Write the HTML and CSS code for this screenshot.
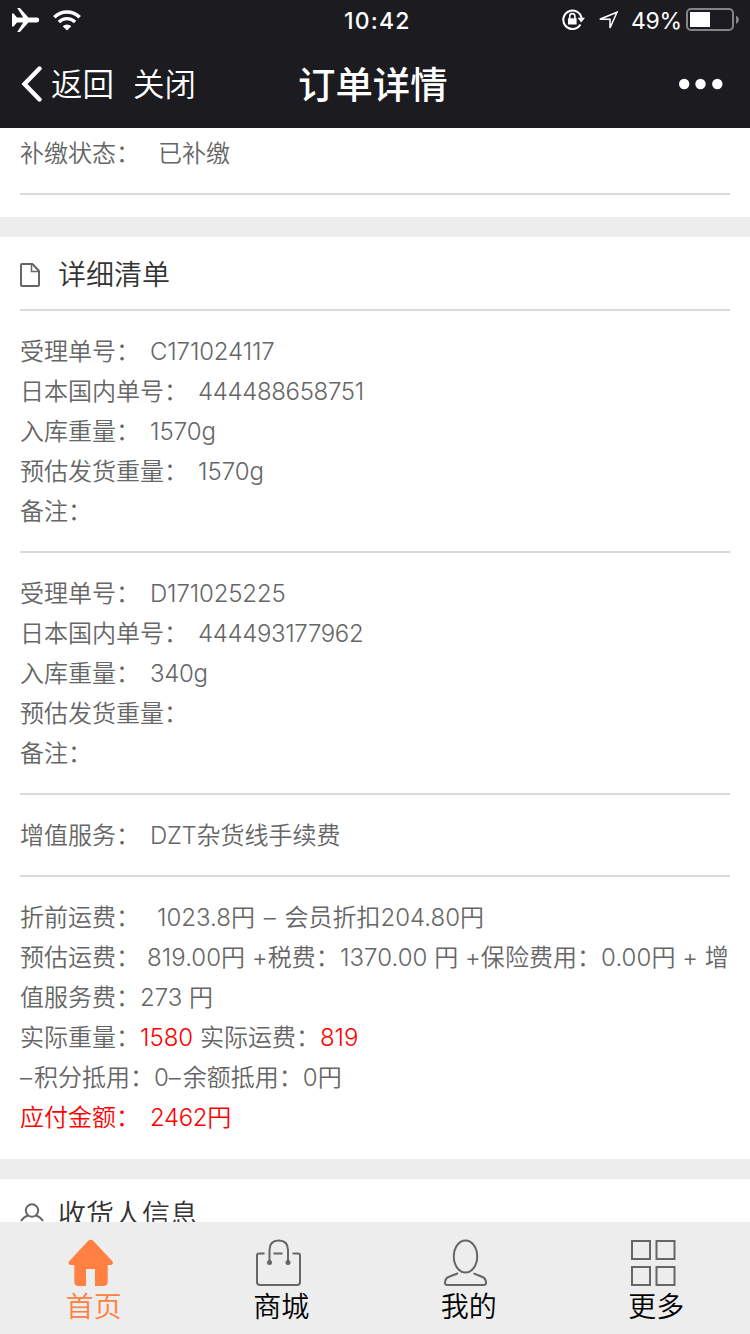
FILE: index.html
```html
<!DOCTYPE html>
<html lang="zh-CN">
<head>
<meta charset="utf-8">
<title>订单详情</title>
<link rel="stylesheet" href="styles.css">
</head>
<body>
<header class="top">
  <div class="status">
    <svg class="plane" width="28" height="26" viewBox="0 0 28 26"><path fill="#fff" d="M0 6.500h1.600L5 10.600h6.200L5.200.9h2.700l8.500 9.700h8.400a2.400 2.400 0 0 1 0 4.800h-8.400L7.900 25.100H5.200l6-9.700H5l-3.400 4.100H0z"/></svg>
    <svg class="wifi" width="28" height="21" viewBox="0 0 28 21"><g fill="none" stroke="#fff" stroke-width="3.400"><path d="M1.300 7.200a18 18 0 0 1 25.400 0"/><path d="M5.900 12a11.500 11.500 0 0 1 16.200 0"/></g><path fill="#fff" d="M14 20.500l-4.300-4.300a6 6 0 0 1 8.600 0z"/></svg>
    <span class="clock">10:42</span>
    <svg class="lock" width="24" height="22" viewBox="0 0 24 22"><path d="M18.400 15.500A9.200 9.200 0 1 1 19.600 9.500" fill="none" stroke="#fff" stroke-width="2"/><path d="M15.500 8.800H23l-3.800 4.700z" fill="#fff"/><path d="M6 9.300h8.600v6.200H6z" fill="#fff"/><path d="M7.700 10V7.200a2.600 2.600 0 0 1 5.200 0V10" fill="none" stroke="#fff" stroke-width="1.600"/></svg>
    <svg class="loc" width="21" height="21" viewBox="0 0 21 21"><path d="M1.800 9.300L19 2.200 12 18V9.300z" fill="none" stroke="#fff" stroke-width="1.500"/></svg>
    <span class="pct">49%</span>
    <svg class="battery" width="54" height="24" viewBox="0 0 54 24"><rect x="1" y="1" width="46" height="21" rx="4" fill="none" stroke="#858587" stroke-width="2"/><rect x="4" y="4" width="20" height="15" fill="#fff"/><path d="M50 7.500q3 1.500 3 4.200t-3 4.200z" fill="#858587"/></svg>
  </div>
  <nav class="bar">
    <svg class="back" width="22" height="36" viewBox="0 0 22 36"><path d="M18.500 2.500L3.500 18l15 15.500" fill="none" stroke="#fff" stroke-width="4.400" stroke-linecap="round"/></svg>
    <span class="nav-link ret">返回</span>
    <span class="nav-link close">关闭</span>
    <h1 class="title">订单详情</h1>
    <svg class="dots" width="44" height="12" viewBox="0 0 44 12" fill="#fff"><circle cx="5.200" cy="6" r="5.200"/><circle cx="21.500" cy="6" r="5.200"/><circle cx="38.300" cy="6" r="5.200"/></svg>
  </nav>
</header>

<main class="content">
  <section class="card first">
    <div class="group"><p class="row">补缴状态：<span class="v w18">已补缴</span></p></div>
  </section>
  <section class="card">
    <h2 class="heading">
      <svg class="doc" width="20" height="24" viewBox="0 0 20 24" fill="none" stroke="#666" stroke-width="2"><path d="M2 1h10.500L19 8v14a1 1 0 0 1-1 1H2a1 1 0 0 1-1-1V2a1 1 0 0 1 1-1z"/><path d="M11.500 1v7.500H19" stroke-width="1.500"/></svg>
      <span>详细清单</span>
    </h2>
    <div class="group">
      <p class="row">受理单号：<span class="v code">C171024117</span></p>
      <p class="row">日本国内单号：<span class="v num">444488658751</span></p>
      <p class="row">入库重量：<span class="v">1570g</span></p>
      <p class="row">预估发货重量：<span class="v">1570g</span></p>
      <p class="row">备注：</p>
    </div>
    <div class="group">
      <p class="row">受理单号：<span class="v code">D171025225</span></p>
      <p class="row">日本国内单号：<span class="v num">444493177962</span></p>
      <p class="row">入库重量：<span class="v num">340g</span></p>
      <p class="row">预估发货重量：</p>
      <p class="row">备注：</p>
    </div>
    <div class="group">
      <p class="row">增值服务：<span class="v"><span class="num">DZT</span>杂货线手续费</span></p>
    </div>
    <div class="group last">
      <p class="row">折前运费：<span class="v w17">1023.8円 <span class="dash">–</span> 会员折扣204.80円</span></p>
      <p class="row">预估运费：<span class="v w7 wide">819.00円 +税费：1370.00 円 +保险费用：0.00円 + 增</span></p>
      <p class="row">值服务费：273 円</p>
      <p class="row">实际重量：<span class="red">1580</span> 实际运费：<span class="red">819</span></p>
      <p class="row"><span class="minus">–</span>积分抵用：0<span class="minus">–</span>余额抵用：0円</p>
      <p class="row red">应付金额：<span class="v num">2462円</span></p>
    </div>
  </section>
  <section class="card">
    <h2 class="heading receiver">
      <svg class="person" width="24" height="24" viewBox="0 0 24 24" fill="none" stroke="#666" stroke-width="2"><circle cx="12" cy="7.500" r="6.200"/><path d="M1 18q3-4.500 7.500-5.500M23 18q-3-4.500-7.500-5.500"/></svg>
      <span>收货人信息</span>
    </h2>
  </section>
</main>

<footer class="tabs">
  <a class="tab active"><svg width="46" height="48" viewBox="0 0 46 48"><path fill="#ff8040" d="M20.200 1.800q2.600-2.300 5 0L44.600 22.500q1 3-1.600 3.500h-3.300v16.500q0 4.500-4.500 4.500H27V30h-9v17h-7.200q-4.500 0-4.500-4.500V26H2.500q-2.700-.5-1.500-3.500z"/></svg><span>首页</span></a>
  <a class="tab"><svg width="46" height="48" viewBox="0 0 46 48" fill="none" stroke="#666" stroke-width="2"><path d="M9.500 14.500H4q-2 0-2 2V43q0 3 3 3h37q3 0 3-3V16.500q0-2-2-2h-5.500M18.500 14.500h9"/><path d="M14.500 23V11q0-9.500 9.200-9.500T33 11v12"/><circle cx="14.500" cy="23.500" r="1.500" fill="#666"/><circle cx="33" cy="23.500" r="1.500" fill="#666"/></svg><span>商城</span></a>
  <a class="tab"><svg width="46" height="48" viewBox="0 0 46 48" fill="none" stroke="#666" stroke-width="2"><ellipse cx="22.500" cy="17.500" rx="11.700" ry="16"/><path d="M15 34.300L5.500 38Q2 39.500 2 44q0 2 2.500 2h36q2.500 0 2.500-2 0-4.500-3.500-6L30.500 34.300"/></svg><span>我的</span></a>
  <a class="tab"><svg width="46" height="48" viewBox="0 0 46 48" fill="none" stroke="#666" stroke-width="2"><rect x="2" y="2" width="18" height="18"/><rect x="26.500" y="2" width="18" height="18"/><rect x="2" y="28" width="18" height="18"/><rect x="26.500" y="28" width="18" height="18"/></svg><span>更多</span></a>
</footer>
</body>
</html>
```
FILE: styles.css
```css
* { box-sizing: border-box; margin: 0; padding: 0; }
body {
  width: 750px; height: 1334px; overflow: hidden;
  display: flex; flex-direction: column;
  background: #fff; color: #666;
  font-family: Inter, "Noto Sans CJK SC", sans-serif;
  font-size: 24px; font-weight: 350;
}
svg { display: block; flex: none; }
.top { flex: none; height: 128px; background: #1c1b20; color: #fff; }
.status { height: 40px; display: flex; align-items: center; padding-left: 12px; }
.wifi { margin-left: 13px; }
.clock { margin-left: 263px; width: 67px; padding-top: 1px; font-size: 23px; font-weight: 500; letter-spacing: 1.2px; white-space: nowrap; }
.lock { margin-left: 151px; }
.loc { margin-left: 12px; }
.pct { margin-left: 12px; width: 50px; padding-top: 1px; font-size: 23px; font-weight: 400; letter-spacing: -.3px; white-space: nowrap; }
.battery { margin-left: 5px; }
.bar { height: 88px; display: flex; align-items: center; padding: 0 27px 0 21px; }
.nav-link { padding-top: 2px; font-size: 31.5px; font-weight: 350; line-height: 44px; white-space: nowrap; }
.ret { margin-left: 8px; width: 62px; }
.close { margin-left: 20px; width: 62px; }
.title { margin-left: 103px; padding-top: 4px; font-size: 37.4px; font-weight: 500; line-height: 50px; white-space: nowrap; }
.dots { margin-left: auto; }
.content { flex: 1; min-height: 0; overflow: hidden; background: #ededed; display: flex; flex-direction: column; gap: 20px; }
.card { flex: none; background: #fff; padding: 0 20px; }
.first { padding-bottom: 22px; }
.first .group { padding-top: 5px; }
.group { padding: 20px 0; border-bottom: 2px solid #d9d9d9; }
.last { border-bottom: 0; padding-bottom: 22px; }
.row { height: 40px; line-height: 40px; white-space: pre; }
.group .row { padding-top: 0; line-height: 41px; }
.v { margin-left: 10px; }
.w18 { margin-left: 18px; }
.w17 { margin-left: 17px; }
.w7 { margin-left: 7px; }
.num { letter-spacing: -.35px; }
.code { letter-spacing: -.15px; }
.wide { letter-spacing: .06px; }
.dash { display: inline-block; width: 13px; margin: 0 1px 0 2px; }
.minus { display: inline-block; width: 14px; }
.red { color: #f00; }
.heading { height: 74px; padding-top: 3px; border-bottom: 2px solid #d9d9d9; display: flex; align-items: center; color: #333; font-size: 28px; font-weight: 350; line-height: 40px; white-space: nowrap; }
.receiver { padding-top: 0; }
.doc { margin-right: 18px; }
.person { margin-right: 14px; }
.tabs { flex: none; height: 112px; background: #ededed; display: grid; grid-template-columns: repeat(4, 187.5px); color: #000; }
.tab { display: flex; flex-direction: column; align-items: center; padding-top: 17px; font-size: 28px; line-height: 40px; }
.tab svg { margin-right: 6px; }
.active { color: #ff8040; }
```
